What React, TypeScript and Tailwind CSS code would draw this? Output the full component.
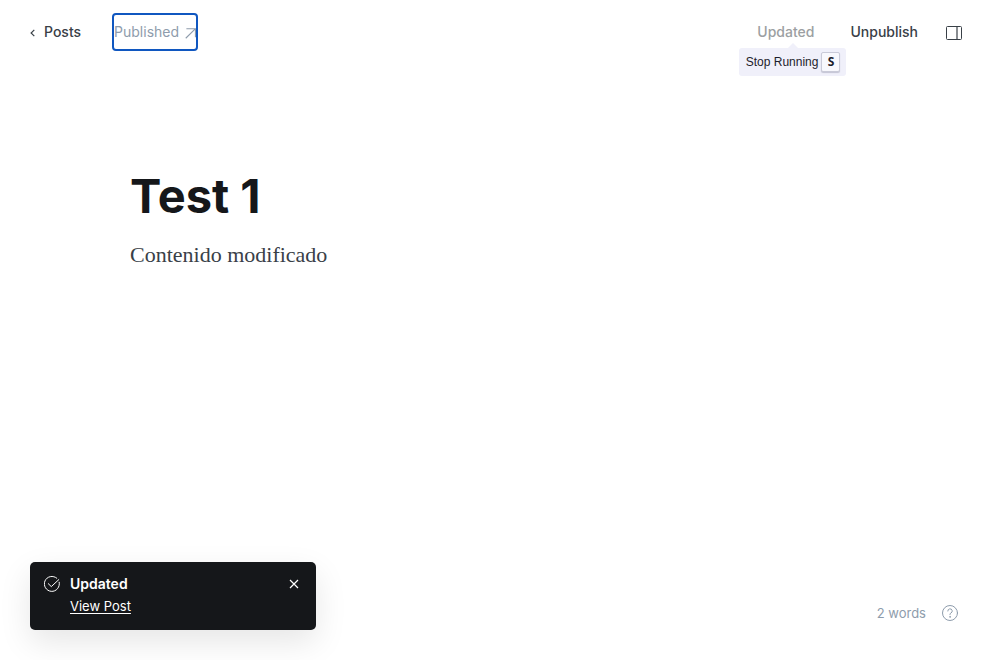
import { useState } from 'react';

function ArrowIcon() {
  return (
    <svg className="mt-0.5 size-[11px]" viewBox="0 0 12 12" fill="none" stroke="currentColor" strokeWidth="1.2" aria-hidden="true">
      <path d="M.8 11.2 11.2 1M1.5.8h9.9v9.4" />
    </svg>
  );
}

function SidebarIcon() {
  return (
    <svg className="mt-0.5 size-4" viewBox="0 0 16 16" fill="none" stroke="currentColor" aria-hidden="true">
      <rect x="0.5" y="1.5" width="15" height="13" rx="1" />
      <path d="M11 1.5v13" strokeWidth="1.2" />
    </svg>
  );
}

function CheckIcon() {
  return (
    <svg
      className="mt-0.5 size-4 shrink-0"
      viewBox="0 0 16 16"
      fill="none"
      stroke="currentColor"
      strokeLinecap="round"
      strokeLinejoin="round"
      aria-hidden="true"
    >
      <path d="M15.2 6.2A7.5 7.5 0 1 1 12.8 2.2" />
      <path d="m4.3 7.7 3 2.9L14.8 3.6" />
    </svg>
  );
}

function HelpIcon() {
  return (
    <svg className="size-4" viewBox="0 0 16 16" fill="none" stroke="currentColor" strokeLinecap="round" aria-hidden="true">
      <circle cx="8" cy="8" r="7.5" />
      <path d="M5.8 6a2.2 2.2 0 1 1 3.2 2C8.3 8.3 8 8.7 8 9.4v.3" />
      <circle cx="8" cy="11.9" r="0.3" fill="currentColor" />
    </svg>
  );
}

function Header() {
  return (
    <header className="flex h-16 items-center justify-between pr-[38px] pl-[30px] text-sm">
      <nav className="flex items-center gap-[31px]">
        <a href="#posts" className="flex items-center gap-[9px] font-medium text-[#394047]">
          <svg className="mt-0.5 h-2 w-[5px]" viewBox="0 0 5 8" fill="none" stroke="currentColor" strokeWidth="1.2" aria-hidden="true">
            <path d="M4.3.8 1.1 4l3.2 3.2" />
          </svg>
          Posts
        </a>
        <a
          href="#published"
          className="flex h-[38px] items-center gap-1.5 rounded border-2 border-[#1057c0] text-[#8e9cac]"
        >
          Published
          <ArrowIcon />
        </a>
      </nav>
      <div className="flex items-center gap-7">
        <div className="flex items-center gap-9">
          <div className="relative">
            <button type="button" className="block font-medium text-[#9c9fa2]">
              Updated
            </button>
            <div
              role="tooltip"
              className="absolute top-[26px] -right-8 flex h-7 items-center gap-[3px] rounded-[3px] bg-[#f0f0fa] pr-1.5 pl-[7px] font-['Liberation_Sans',sans-serif] text-xs whitespace-nowrap text-[#1d1d2c] before:absolute before:-top-[5px] before:left-1/2 before:-translate-x-1/2 before:border-x-[5px] before:border-b-[5px] before:border-x-transparent before:border-b-[#f0f0fa]"
            >
              Stop Running
              <kbd className="flex h-5 w-[19px] items-center justify-center rounded-xs border border-[#c9cad8] bg-[#f8f8fd] font-['Noto_Sans',sans-serif] text-xs font-bold shadow-[0_1px_1px_#c4c4d4]">
                S
              </kbd>
            </div>
          </div>
          <button type="button" className="font-medium text-[#394047]">
            Unpublish
          </button>
        </div>
        <button type="button" aria-label="Settings" className="text-[#394047]">
          <SidebarIcon />
        </button>
      </div>
    </header>
  );
}

function Toast({ onClose }: { onClose: () => void }) {
  return (
    <aside
      role="status"
      className="flex h-[68px] w-[286px] items-start gap-2.5 rounded-[5px] bg-[#15171a] px-3.5 pt-3 text-sm text-white shadow-[0_12px_32px_rgba(0,0,0,0.1)]"
    >
      <CheckIcon />
      <div className="flex grow flex-col items-start gap-0.5">
        <strong className="leading-5 font-semibold">Updated</strong>
        <a href="#view-post" className="text-[13px] leading-5 underline underline-offset-2">
          View Post
        </a>
      </div>
      <button type="button" aria-label="Close" onClick={onClose} className="px-[3px] py-[5px]">
        <svg className="size-2.5" viewBox="0 0 10 10" fill="none" stroke="currentColor" strokeWidth="1.2" aria-hidden="true">
          <path d="m1 1 8 8M9 1 1 9" />
        </svg>
      </button>
    </aside>
  );
}

export default function App() {
  const [toastOpen, setToastOpen] = useState(true);

  return (
    <div className="flex min-h-screen flex-col bg-white font-['Inter',sans-serif]">
      <Header />
      <main className="mx-auto w-full max-w-[740px] grow pt-[102px]">
        <h1 className="text-[47px] leading-[60px] font-bold text-[#15171a]">Test 1</h1>
        <p className="mt-[13px] font-['Liberation_Serif',serif] text-[22px] leading-8 text-[#394047]">
          Contenido modificado
        </p>
      </main>
      <footer className="flex items-end justify-between pr-[42px] pb-[30px] pl-[30px]">
        {toastOpen ? <Toast onClose={() => setToastOpen(false)} /> : <span />}
        <div className="mb-[7px] flex items-center gap-4 text-[13px] leading-5 text-[#8e9cac]">
          <span>2 words</span>
          <button type="button" aria-label="Help">
            <HelpIcon />
          </button>
        </div>
      </footer>
    </div>
  );
}
